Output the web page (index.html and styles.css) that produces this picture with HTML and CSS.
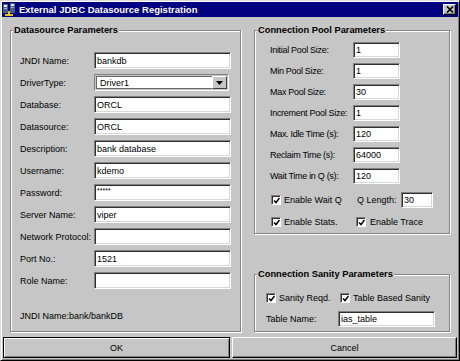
FILE: index.html
```html
<!DOCTYPE html>
<html lang="en">
<head>
  <meta charset="UTF-8">
  <title>External JDBC Datasource Registration</title>
  <link rel="stylesheet" href="styles.css">
</head>
<body>
  <div class="window">
    <div class="titlebar">
      <svg class="app-icon" width="12" height="13" viewBox="0 0 12 13">
        <rect x="0" y="1" width="5" height="9" fill="#4a5f85"/>
        <rect x="1" y="2" width="3" height="2" fill="#e4ecf4"/>
        <rect x="1" y="5" width="3" height="1" fill="#9fb0c8"/>
        <rect x="7" y="0" width="5" height="10" fill="#4a5f85"/>
        <rect x="8" y="1" width="3" height="2" fill="#e4ecf4"/>
        <rect x="8" y="4" width="3" height="1" fill="#9fb0c8"/>
        <rect x="5" y="8" width="2" height="3" fill="#e8c800"/>
        <rect x="2" y="11" width="8" height="2" fill="#e8c800"/>
      </svg>
      <span class="title">External JDBC Datasource Registration</span>
      <span class="close">
        <svg width="8" height="7" viewBox="0 0 8 7">
          <path d="M1 0.5 L7 6.5 M7 0.5 L1 6.5" stroke="#000" stroke-width="1.6"/>
        </svg>
      </span>
    </div>

    <div class="content">
      <fieldset class="group group-ds">
        <legend>Datasource Parameters</legend>
        <div class="form form-ds">
          <label>JNDI Name:</label>
          <div class="field">bankdb</div>
          <label>DriverType:</label>
          <div class="combo">
            <span class="combo-value">Driver1</span>
            <span class="combo-btn">
              <svg width="7" height="4" viewBox="0 0 7 4"><polygon points="0,0 7,0 3.5,4" fill="#000"/></svg>
            </span>
          </div>
          <label>Database:</label>
          <div class="field">ORCL</div>
          <label>Datasource:</label>
          <div class="field">ORCL</div>
          <label>Description:</label>
          <div class="field">bank database</div>
          <label>Username:</label>
          <div class="field">kdemo</div>
          <label>Password:</label>
          <div class="field field-pw">*****</div>
          <label>Server Name:</label>
          <div class="field">viper</div>
          <label>Network Protocol:</label>
          <div class="field"></div>
          <label>Port No.:</label>
          <div class="field">1521</div>
          <label>Role Name:</label>
          <div class="field"></div>
        </div>
        <p class="note">JNDI Name:bank/bankDB</p>
      </fieldset>

      <div class="col-right">
        <fieldset class="group group-pool">
          <legend>Connection Pool Parameters</legend>
          <div class="form form-pool">
            <label>Initial Pool Size:</label>
            <div class="field">1</div>
            <label>Min Pool Size:</label>
            <div class="field">1</div>
            <label>Max Pool Size:</label>
            <div class="field">30</div>
            <label>Increment Pool Size:</label>
            <div class="field">1</div>
            <label>Max. Idle Time (s):</label>
            <div class="field">120</div>
            <label>Reclaim Time (s):</label>
            <div class="field">64000</div>
            <label>Wait Time in Q (s):</label>
            <div class="field">120</div>
          </div>
          <div class="check-row">
            <span class="check-item wait-q"><span class="check"><svg width="7" height="7" viewBox="0 0 7 7"><path d="M1 3.5 L3 5.5 L6.5 1" fill="none" stroke="#000" stroke-width="1.5"/></svg></span>Enable Wait Q</span>
            <span class="q-label">Q Length:</span>
            <div class="field field-q">30</div>
          </div>
          <div class="check-row">
            <span class="check-item stats"><span class="check"><svg width="7" height="7" viewBox="0 0 7 7"><path d="M1 3.5 L3 5.5 L6.5 1" fill="none" stroke="#000" stroke-width="1.5"/></svg></span>Enable Stats.</span>
            <span class="check-item trace"><span class="check"><svg width="7" height="7" viewBox="0 0 7 7"><path d="M1 3.5 L3 5.5 L6.5 1" fill="none" stroke="#000" stroke-width="1.5"/></svg></span>Enable Trace</span>
          </div>
        </fieldset>

        <fieldset class="group group-sanity">
          <legend>Connection Sanity Parameters</legend>
          <div class="check-row">
            <span class="check-item sanity"><span class="check"><svg width="7" height="7" viewBox="0 0 7 7"><path d="M1 3.5 L3 5.5 L6.5 1" fill="none" stroke="#000" stroke-width="1.5"/></svg></span>Sanity Reqd.</span>
            <span class="check-item"><span class="check"><svg width="7" height="7" viewBox="0 0 7 7"><path d="M1 3.5 L3 5.5 L6.5 1" fill="none" stroke="#000" stroke-width="1.5"/></svg></span>Table Based Sanity</span>
          </div>
          <div class="form form-sanity">
            <label>Table Name:</label>
            <div class="field">ias_table</div>
          </div>
        </fieldset>
      </div>
    </div>

    <div class="buttons">
      <button class="btn btn-ok">OK</button>
      <button class="btn btn-cancel">Cancel</button>
    </div>
  </div>
</body>
</html>
```

FILE: styles.css
```css
* {
  box-sizing: border-box;
}

body {
  margin: 0;
  background-color: #c6c6c6;
  font-family: 'Liberation Sans', Arial, sans-serif;
  font-size: 9px;
  color: #000;
}

.window {
  width: 460px;
  height: 361px;
  padding: 1px;
  background-color: #c6c6c6;
  border: 1px solid;
  border-color: #dcdcdc #000 #000 #dcdcdc;
  box-shadow: inset 1px 1px 0 #fff, inset -1px -1px 0 #808080;
  display: flex;
  flex-direction: column;
}

/* title bar */

.titlebar {
  height: 15px;
  background-color: #000080;
  color: #fff;
  display: flex;
  align-items: center;
}

.app-icon {
  margin-left: 1px;
}

.title {
  margin-left: 4px;
  font-weight: bold;
  font-size: 9.5px;
}

.close {
  margin-left: auto;
  margin-right: 2px;
  width: 13px;
  height: 11px;
  background-color: #c6c6c6;
  border: 1px solid;
  border-color: #fff #000 #000 #fff;
  box-shadow: inset -1px -1px 0 #808080;
  display: flex;
  align-items: center;
  justify-content: center;
}

/* groups */

.content {
  display: flex;
  gap: 13px;
  padding: 8px 8px 0;
}

.group {
  margin: 0;
  min-width: 0;
  border: 1px solid #868686;
  box-shadow: inset 1px 1px 0 #fff, 1px 1px 0 #fff;
}

.group legend {
  font-weight: bold;
  font-size: 9.3px;
  line-height: 11px;
  padding: 0 1px;
  background-color: #c6c6c6;
}

.group-ds {
  width: 231px;
  height: 307px;
  padding: 16px 9px 0;
}

.group-ds legend {
  margin-left: -7px;
}

.col-right {
  width: 196px;
  display: flex;
  flex-direction: column;
  justify-content: space-between;
}

.group-pool {
  height: 209px;
  padding: 6px 0 0 15px;
}

.group-pool legend {
  margin-left: -13px;
}

.group-sanity {
  height: 63px;
  padding: 12px 0 0 11px;
}

.group-sanity legend {
  margin-left: -9px;
}

/* forms */

.form {
  display: grid;
  align-items: center;
}

.form label {
  white-space: nowrap;
}

.form-ds {
  grid-template-columns: 74px 137px;
  grid-auto-rows: 17px;
  row-gap: 5px;
}

.form-pool {
  grid-template-columns: 83px 47px;
  grid-auto-rows: 16px;
  row-gap: 5px;
}

.form-pool label {
  letter-spacing: -0.3px;
}

.form-sanity {
  margin-top: 7px;
  grid-template-columns: 72px 97px;
  grid-auto-rows: 16px;
}

.field {
  height: 100%;
  padding-left: 2px;
  background-color: #fff;
  border: 1px solid;
  border-color: #808080 #fff #fff #808080;
  box-shadow: inset 1px 1px 0 #303030, inset -1px -1px 0 #d8d8d8;
  display: flex;
  align-items: center;
  white-space: nowrap;
}

.field-pw {
  font-size: 7px;
  align-items: flex-start;
  padding-top: 2px;
}

.combo {
  width: 135px;
  height: 100%;
  display: flex;
  padding: 1px;
  background-color: #c6c6c6;
  border: 1px solid;
  border-color: #808080 #fff #fff #808080;
}

.combo-value {
  flex: 1;
  padding-left: 3px;
  background-color: #fff;
  border: 1px solid #6a6a6a;
  border-right: 0;
  display: flex;
  align-items: center;
}

.combo-btn {
  width: 15px;
  border: 1px solid;
  border-color: #fff #404040 #404040 #fff;
  display: flex;
  align-items: center;
  justify-content: center;
}

.note {
  margin: 22px 0 0;
  line-height: 11px;
}

/* checkboxes */

.check-row {
  display: flex;
  align-items: center;
  height: 12px;
  margin-top: 10px;
  white-space: nowrap;
}

.group-sanity .check-row {
  margin-top: 0;
}

.check-item {
  display: flex;
  align-items: center;
  gap: 3px;
}

.check {
  width: 10px;
  height: 10px;
  background-color: #fff;
  border: 1px solid;
  border-color: #808080 #fff #fff #808080;
  box-shadow: inset 1px 1px 0 #303030;
  display: flex;
  align-items: center;
  justify-content: center;
  padding: 1px 0 0 1px;
}

.wait-q {
  width: 86px;
  margin-left: 1px;
}

.stats {
  width: 85px;
  margin-left: 1px;
}

.trace {
  gap: 4px;
}

.sanity {
  width: 74px;
}

.q-label {
  width: 44px;
}

.field-q {
  width: 32px;
  height: 16px;
}

/* buttons */

.buttons {
  display: flex;
  gap: 2px;
  padding: 0 1px;
  margin-top: 5px;
}

.btn {
  height: 21px;
  margin: 0;
  padding: 0;
  font: inherit;
  color: #000;
  background-color: #c6c6c6;
  border: 1px solid;
  border-color: #fff #000 #000 #fff;
  box-shadow: inset -1px -1px 0 #808080;
}

.btn-ok {
  width: 227px;
  border-color: #000;
  box-shadow: inset 1px 1px 0 #fff, inset -1px -1px 0 #808080;
}

.btn-cancel {
  width: 225px;
}
```
